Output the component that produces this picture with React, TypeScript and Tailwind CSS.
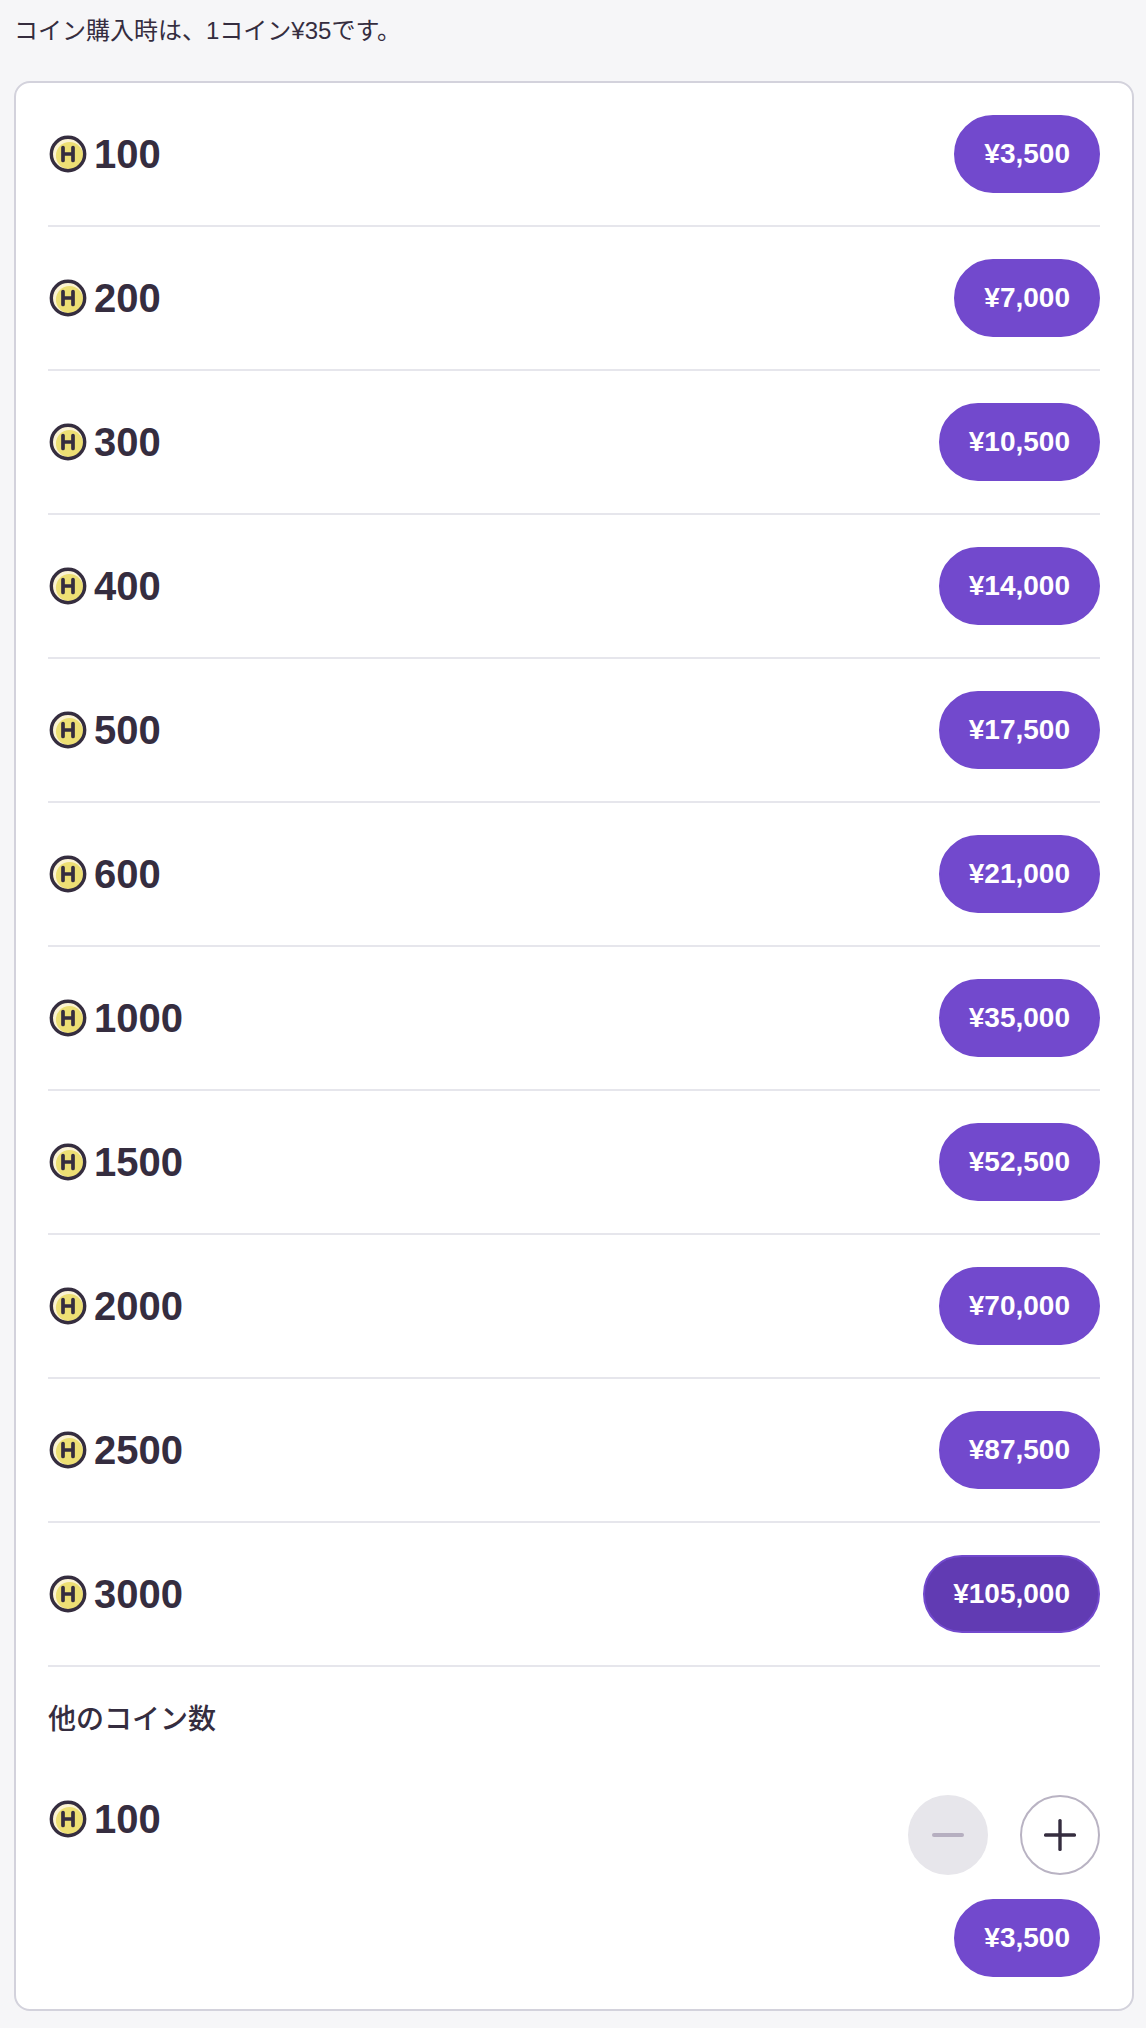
import { useState } from "react";
import clsx from "clsx";

const PRICE_PER_COIN = 35;
const STEP = 100;

const PACKAGES = [100, 200, 300, 400, 500, 600, 1000, 1500, 2000, 2500, 3000];

const formatYen = (coins: number) => `¥${(coins * PRICE_PER_COIN).toLocaleString("en-US")}`;

function CoinIcon() {
    return (
        <svg width="40" height="40" viewBox="0 0 40 40" fill="none" aria-hidden="true" className="shrink-0">
            <circle cx="20" cy="20" r="16.7" fill="#fbf3d3" />
            <circle cx="21.5" cy="21.7" r="13.6" fill="#eddf74" />
            <circle cx="20" cy="20" r="16.7" stroke="#352d3f" strokeWidth="3.4" />
            <path d="M15 13.6v12.8M25 13.6v12.8M15 20h10" stroke="#352d3f" strokeWidth="3.7" strokeLinecap="round" />
        </svg>
    );
}

function CoinAmount({ coins }: { coins: number }) {
    return (
        <div className="flex items-center gap-1.5">
            <CoinIcon />
            <span className="text-[40px] leading-[48px] font-bold">{coins}</span>
        </div>
    );
}

function PriceButton({ coins, active, onClick }: {
    coins: number;
    active?: boolean;
    onClick?: () => void;
}) {
    return (
        <button
            type="button"
            onClick={onClick}
            className={clsx(
                "h-[78px] rounded-full border-2 border-[#7249cd] px-7 text-[28px] leading-9 font-bold text-white",
                active ? "bg-[#613bb3]" : "bg-[#7249cd]"
            )}
        >
            {formatYen(coins)}
        </button>
    );
}

export default function App() {
    const [selected, setSelected] = useState(3000);
    const [custom, setCustom] = useState(STEP);

    return (
        <main className="min-h-screen bg-[#f6f6f8] pt-3 pr-3 pb-4 pl-[14px] font-['Liberation_Sans','Noto_Sans_CJK_JP',sans-serif] text-[#352d3f]">
            <p className="mb-8 text-2xl leading-[37px]">コイン購入時は、1コイン¥35です。</p>

            <section className="rounded-2xl border-2 border-[#d3d2dc] bg-white px-8 pb-8">
                <ul>
                    {PACKAGES.map((coins) => (
                        <li key={coins} className="flex items-center justify-between border-b-2 border-[#e6e6ec] py-8">
                            <CoinAmount coins={coins} />
                            <PriceButton coins={coins} active={coins === selected} onClick={() => setSelected(coins)} />
                        </li>
                    ))}
                </ul>

                <h2 className="mt-8 mb-[54px] text-[28px] leading-[42px] font-medium">他のコイン数</h2>

                <div className="flex items-start justify-between">
                    <CoinAmount coins={custom} />
                    <div className="flex flex-col items-end gap-6">
                        <div className="flex gap-8">
                            <button
                                type="button"
                                aria-label="減らす"
                                disabled={custom <= STEP}
                                onClick={() => setCustom(custom - STEP)}
                                className="flex size-20 items-center justify-center rounded-full border-2 border-[#b9b3c3] disabled:border-[#e7e6eb] disabled:bg-[#e7e6eb] disabled:text-[#b6afc0]"
                            >
                                <svg width="32" height="32" viewBox="0 0 32 32" stroke="currentColor" strokeWidth="4" strokeLinecap="round">
                                    <path d="M2 16h28" />
                                </svg>
                            </button>
                            <button
                                type="button"
                                aria-label="増やす"
                                onClick={() => setCustom(custom + STEP)}
                                className="flex size-20 items-center justify-center rounded-full border-2 border-[#b9b3c3]"
                            >
                                <svg width="32" height="32" viewBox="0 0 32 32" fill="currentColor">
                                    <rect x="0" y="14.3" width="32" height="3.4" rx="1.5" />
                                    <rect x="14.3" y="0" width="3.4" height="32" rx="1.5" />
                                </svg>
                            </button>
                        </div>
                        <PriceButton coins={custom} />
                    </div>
                </div>
            </section>
        </main>
    );
}
